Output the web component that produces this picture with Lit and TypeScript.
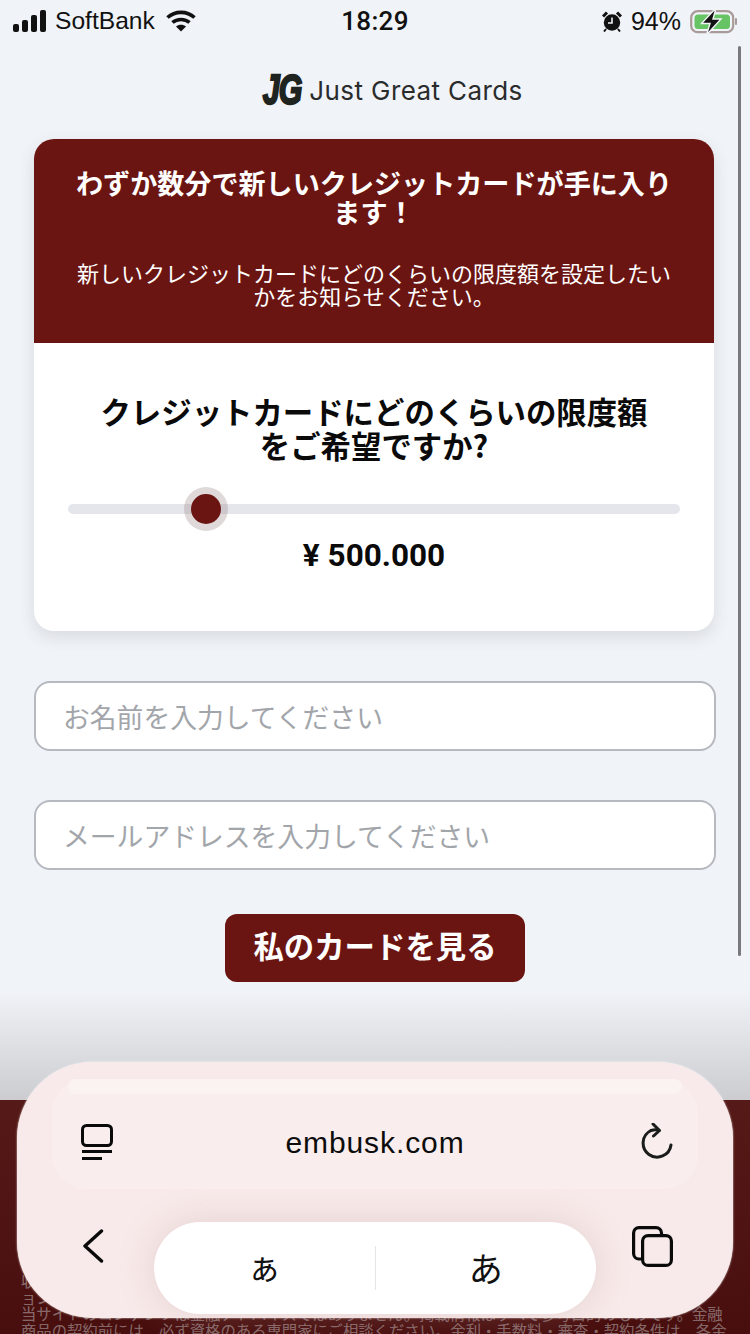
import { css, html, LitElement } from 'lit';
import { customElement } from 'lit/decorators.js';

@customElement('status-bar')
export class StatusBar extends LitElement {
  static styles = css`
    :host {
      display: grid;
      grid-template-columns: 1fr auto 1fr;
      align-items: center;
      height: 42px;
      padding: 0 13px 0 13px;
      color: #111;
      font-family: "Liberation Sans", sans-serif;
    }
    .left, .right { display: flex; align-items: center; }
    .right { justify-content: flex-end; }
    .carrier { font-size: 24.6px; margin-left: 9px; margin-right: 11px; }
    .time { font-family: Roboto, sans-serif; font-size: 26px; font-weight: 500; letter-spacing: 0.3px; }
    .pct { font-size: 25px; margin: 0 9px 0 9px; }
    svg { display: block; }
  `;

  render() {
    return html`
      <div class="left">
        <svg width="33" height="22" viewBox="0 0 33 22" fill="#111">
          <rect x="0" y="14" width="6" height="8" rx="2" />
          <rect x="9" y="10" width="6" height="12" rx="2" />
          <rect x="18" y="5" width="6" height="17" rx="2" />
          <rect x="27" y="0" width="6" height="22" rx="2" />
        </svg>
        <span class="carrier">SoftBank</span>
        <svg width="30" height="22" viewBox="0 0 30 22" fill="none" stroke="#111" stroke-width="3.6">
          <path d="M1.5 7.5C9 .6 21 .6 28.5 7.5" />
          <path d="M6.5 12.5C11 8.4 19 8.4 23.5 12.5" />
          <path d="M15 21.5l-5-5c2.8-2.2 7.2-2.2 10 0z" fill="#111" stroke="none" />
        </svg>
      </div>
      <div class="time">18:29</div>
      <div class="right">
        <svg width="20" height="21" viewBox="0 0 20 21">
          <circle cx="10" cy="11.5" r="8.2" fill="#111" />
          <path d="M1 5.5L5 1.5M19 5.5L15 1.5" stroke="#111" stroke-width="3" />
          <path d="M10 6.5V12H6" fill="none" stroke="#f0f3f7" stroke-width="1.6" />
          <path d="M4 18l-2 2.5M16 18l2 2.5" stroke="#111" stroke-width="2" />
        </svg>
        <span class="pct">94%</span>
        <svg width="47" height="27" viewBox="0 0 47 27">
          <rect x="1.2" y="3.2" width="42" height="21" rx="6.5" fill="none" stroke="#a89b99" stroke-width="2.2" />
          <rect x="4.5" y="6.5" width="35.5" height="14.5" rx="3.5" fill="#66c464" />
          <rect x="45" y="10" width="2" height="7" rx="1" fill="#a89b99" />
          <path d="M26 0L11.5 15.5H20L16.5 27L31 11H23z" fill="#111" stroke="#f0f3f7" stroke-width="1.4" />
        </svg>
      </div>
    `;
  }
}

@customElement('browser-bar')
export class BrowserBar extends LitElement {
  static styles = css`
    :host {
      position: absolute;
      left: 17px;
      top: 1062px;
      width: 716px;
      height: 256px;
      box-sizing: border-box;
      padding: 17px 35px 4px;
      border-radius: 76px;
      background: #f8eaea;
      box-shadow: 0 0 2px rgba(255, 255, 255, 0.9);
      display: flex;
      flex-direction: column;
    }
    .address {
      position: relative;
      height: 110px;
      padding: 16px 25px 0 29px;
      border-radius: 34px;
      background: #f9eded;
      display: flex;
      align-items: center;
      justify-content: space-between;
    }
    .address::before {
      content: "";
      position: absolute;
      left: 16px;
      right: 16px;
      top: 0;
      height: 15px;
      border-radius: 8px;
      background: #fbf2f2;
    }
    .url {
      font-family: "Liberation Sans", sans-serif;
      font-size: 30px;
      letter-spacing: 0.9px;
      color: #0c0c0c;
      margin: 2px 0 0 -4px;
    }
    .tools {
      margin-top: 33px;
      display: flex;
      align-items: flex-start;
      padding-left: 30px;
    }
    .back { margin-top: 7px; }
    .copy { margin: 4px 0 0 36px; }
    .pill {
      width: 442px;
      height: 92px;
      margin-left: 50px;
      border-radius: 46px;
      background: #fff;
      display: flex;
      align-items: center;
      box-shadow: 0 0 34px rgba(190, 150, 150, 0.3);
    }
    .pill span {
      flex: 1;
      text-align: center;
      font-family: "Noto Sans CJK JP", sans-serif;
      color: #111;
      line-height: 44px;
    }
    .pill .small { font-size: 34px; padding-bottom: 5px; }
    .pill .big { font-size: 34px; border-left: 1px solid #e8e5e5; }
    svg { display: block; }
  `;

  render() {
    return html`
      <div class="address">
        <svg width="32" height="36" viewBox="0 0 32 36" fill="none" stroke="#0a0a0a" stroke-width="3">
          <rect x="1.5" y="1.5" width="29" height="20" rx="4" />
          <path d="M1 27.5H31" />
          <path d="M1 34.5H21" />
        </svg>
        <span class="url">embusk.com</span>
        <svg width="32" height="38" viewBox="0 0 32 38" fill="none" stroke="#1a1d1c" stroke-width="3" stroke-linecap="round" stroke-linejoin="round">
          <path d="M10 7.5A14 14 0 1 0 30 22" />
          <path d="M10 7.5C13 6.6 16 6.6 18 7.5" />
          <path d="M12 1L18.5 7.5L12.5 13" />
        </svg>
      </div>
      <div class="tools">
        <svg class="back" width="22" height="34" viewBox="0 0 22 34" fill="none" stroke="#0a0a0a" stroke-width="3.4" stroke-linecap="round" stroke-linejoin="round">
          <path d="M19.5 2L3 17L19.5 32" />
        </svg>
        <div class="pill">
          <span class="small">ぁ</span>
          <span class="big">あ</span>
        </div>
        <svg class="copy" width="41" height="41" viewBox="0 0 41 41" fill="none" stroke="#0a0a0a" stroke-width="3.2">
          <path d="M9 33H7A5.5 5.5 0 0 1 1.6 27.5V7A5.5 5.5 0 0 1 7 1.6H24A5.5 5.5 0 0 1 29.5 7V9" />
          <rect x="10.6" y="9.6" width="28.8" height="29.8" rx="5.5" />
        </svg>
      </div>
    `;
  }
}

@customElement('app-root')
export class AppRoot extends LitElement {
  static styles = css`
    :host {
      display: block;
      position: relative;
      width: 750px;
      height: 1334px;
      overflow: hidden;
      background: #f0f3f7;
      font-family: "Noto Sans CJK JP", sans-serif;
    }
    .logo {
      height: 36px;
      margin-top: 30px;
      padding-left: 34px;
      display: flex;
      align-items: center;
      justify-content: center;
      gap: 6px;
    }
    .logo-mark {
      display: inline-block;
      width: 42px;
      font-family: "Liberation Sans", sans-serif;
      font-weight: 700;
      font-style: italic;
      font-size: 33px;
      line-height: 32px;
      letter-spacing: -1px;
      color: #1f2421;
      -webkit-text-stroke: 1.8px #1f2421;
      transform: scale(0.92, 1.28);
      white-space: nowrap;
    }
    .logo-name {
      font-family: Inter, sans-serif;
      font-size: 26px;
      color: #2a2c2c;
      letter-spacing: 0.4px;
    }
    .card {
      width: 680px;
      margin: 31px 0 0 34px;
      border-radius: 20px;
      overflow: hidden;
      background: #fff;
      box-shadow: 0 6px 16px rgba(70, 75, 95, 0.14);
    }
    .card-head {
      height: 204px;
      box-sizing: border-box;
      padding: 30px 40px 0;
      background: #6b1512;
      color: #fff;
      text-align: center;
    }
    h1 {
      margin: 0;
      font-size: 27.1px;
      line-height: 28.5px;
      font-weight: 700;
    }
    .card-head p {
      margin: 35px 0 0;
      font-size: 22px;
      line-height: 23px;
      font-weight: 400;
    }
    .card-body {
      height: 288px;
      box-sizing: border-box;
      padding: 51px 34px 0;
      text-align: center;
    }
    h2 {
      margin: 0;
      padding: 0 25px;
      font-size: 30.4px;
      line-height: 34px;
      font-weight: 700;
      color: #0a0a0a;
    }
    .track {
      position: relative;
      height: 10px;
      margin-top: 42px;
      border-radius: 5px;
      background: #e5e6eb;
    }
    .thumb {
      position: absolute;
      left: 123px;
      top: -10px;
      width: 30px;
      height: 30px;
      border-radius: 50%;
      background: #6b1512;
      box-shadow: 0 0 0 7px rgba(150, 130, 130, 0.3);
    }
    .value {
      margin-top: 21px;
      font-family: Roboto, sans-serif;
      font-size: 31.5px;
      line-height: 42px;
      font-weight: 700;
      color: #0a0a0a;
    }
    .field {
      width: 682px;
      height: 70px;
      box-sizing: border-box;
      margin-left: 34px;
      padding: 0 0 0 27px;
      border: 2px solid #b6b9bf;
      border-radius: 16px;
      background: #fff;
      display: flex;
      align-items: center;
      font-size: 26.8px;
      color: #a2a5aa;
    }
    .field.first { margin-top: 50px; }
    .field.second { margin-top: 49px; }
    .cta {
      display: block;
      width: 300px;
      height: 68px;
      margin: 44px auto 0;
      padding: 0 0 6px;
      border: 0;
      border-radius: 12px;
      background: #6b1512;
      color: #fff;
      font: 700 30.4px "Noto Sans CJK JP", sans-serif;
    }
    footer {
      height: 240px;
      margin-top: 118px;
      box-sizing: border-box;
      padding: 172px 0 0 21px;
      background: #5c1410;
      color: rgba(255, 255, 255, 0.62);
      font-size: 15.35px;
      line-height: 16.6px;
      white-space: nowrap;
    }
    .fade {
      position: absolute;
      left: 0;
      right: 0;
      top: 990px;
      bottom: 0;
      pointer-events: none;
      background: linear-gradient(rgba(60, 50, 55, 0) 0, rgba(60, 50, 55, 0.2) 110px, rgba(40, 5, 10, 0.38) 344px);
    }
    .scroll {
      position: absolute;
      right: 9px;
      top: 46px;
      width: 3.5px;
      height: 910px;
      border-radius: 2px;
      background: #77797c;
    }
  `;

  render() {
    return html`
      <status-bar></status-bar>
      <div class="logo">
        <span class="logo-mark">JG</span>
        <span class="logo-name">Just Great Cards</span>
      </div>
      <section class="card">
        <div class="card-head">
          <h1>わずか数分で新しいクレジットカードが手に入ります！</h1>
          <p>新しいクレジットカードにどのくらいの限度額を設定したいかをお知らせください。</p>
        </div>
        <div class="card-body">
          <h2>クレジットカードにどのくらいの限度額をご希望ですか?</h2>
          <div class="track"><div class="thumb"></div></div>
          <div class="value">¥ 500.000</div>
        </div>
      </section>
      <div class="field first">お名前を入力してください</div>
      <div class="field second">メールアドレスを入力してください</div>
      <button class="cta">私のカードを見る</button>
      <footer>
        <div>収</div>
        <div>ョン</div>
        <div>当サイトのコンテンツは金融アドバイスではありません。掲載情報はすべて参考目的のものです。金融</div>
        <div>商品の契約前には、必ず資格のある専門家にご相談ください。金利・手数料・審査・契約条件は、各金</div>
      </footer>
      <div class="fade"></div>
      <div class="scroll"></div>
      <browser-bar></browser-bar>
    `;
  }
}
